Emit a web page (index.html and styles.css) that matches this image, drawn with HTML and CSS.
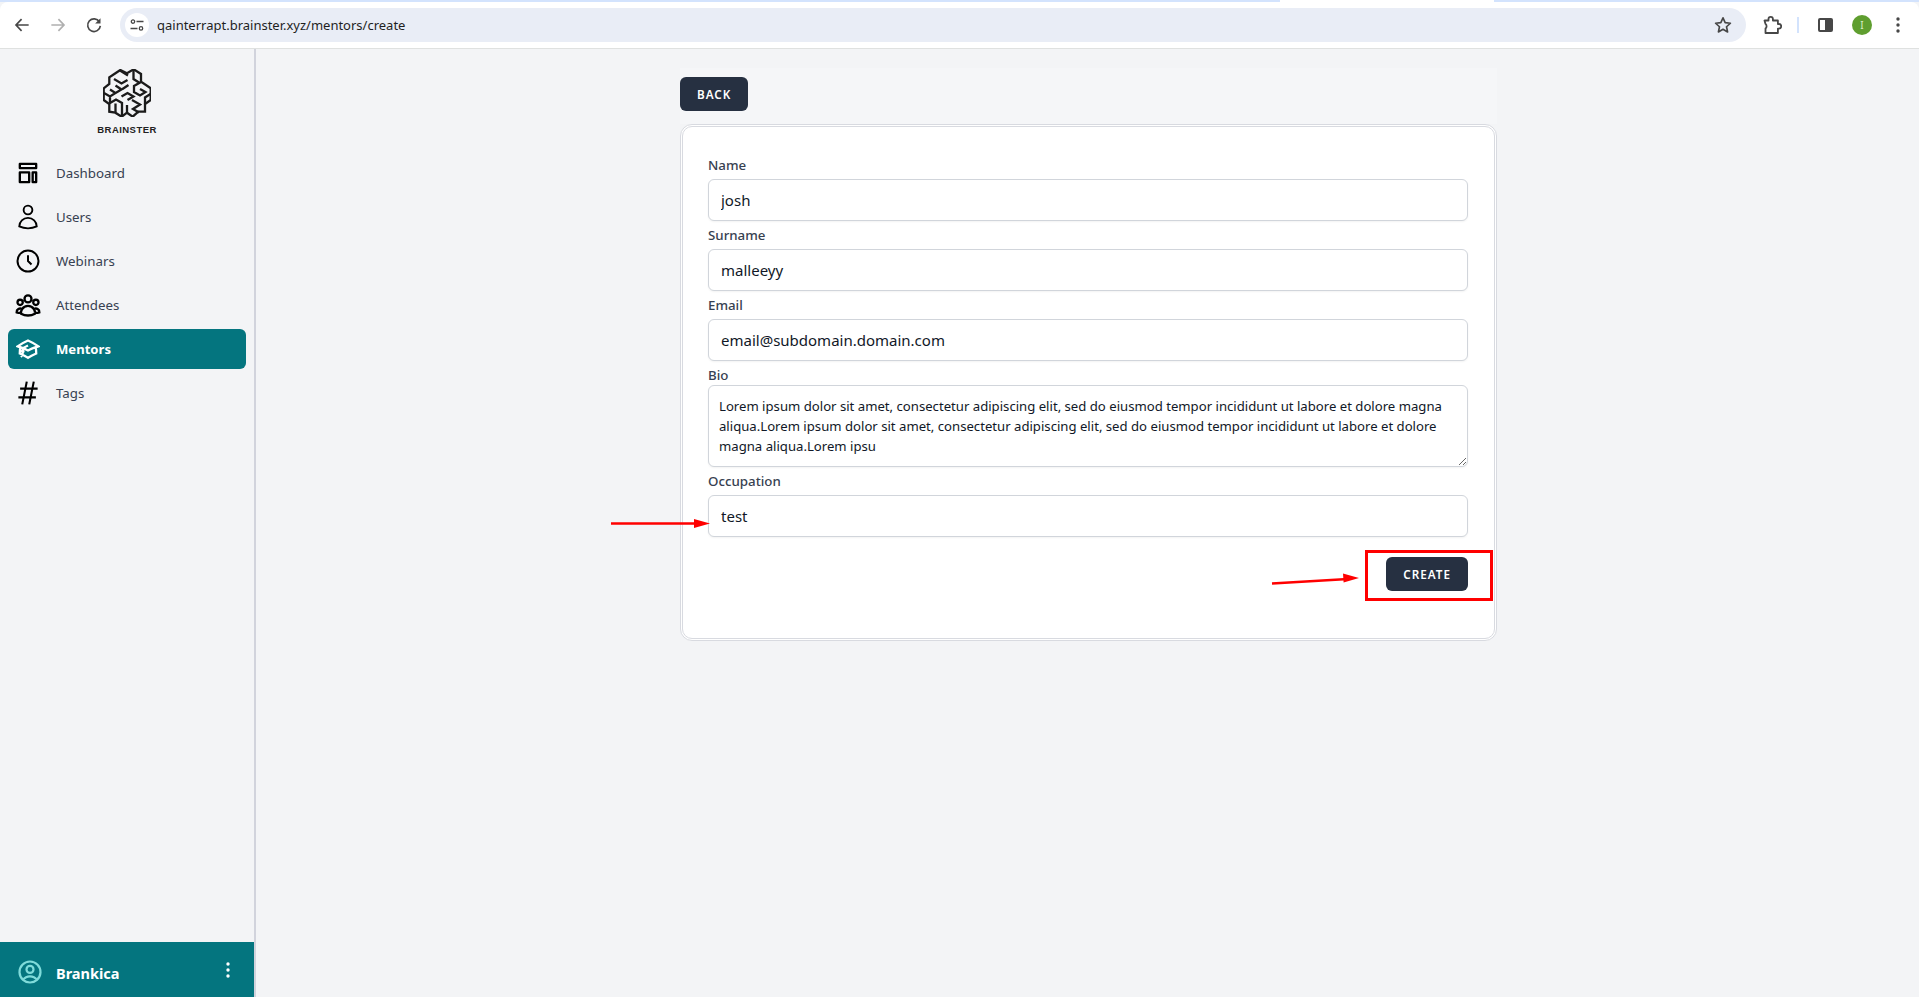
FILE: index.html
```html
<!DOCTYPE html>
<html lang="en">
<head>
<meta charset="utf-8">
<title>Create mentor</title>
<link rel="stylesheet" href="styles.css">
</head>
<body>
<div class="window">
  <div class="tabstrip"><span class="seg seg-a"></span><span class="seg seg-gap"></span><span class="seg seg-b"></span></div>
  <header class="toolbar">
    <svg class="tb-icon back" viewBox="0 0 24 24"><path d="M20 12H5m6.5-7L4.8 12l6.7 7" fill="none" stroke="#474747" stroke-width="2"/></svg>
    <svg class="tb-icon fwd" viewBox="0 0 24 24"><path d="M4 12h15m-6.500-7 6.700 7-6.700 7" fill="none" stroke="#b0b0b0" stroke-width="2"/></svg>
    <svg class="tb-icon reload" viewBox="0 0 24 24"><path d="M18.500 8.200A7.600 7.600 0 1 0 19.600 13" fill="none" stroke="#474747" stroke-width="2"/><path d="M19.800 3.800v6.400h-6.400z" fill="#474747"/></svg>
    <div class="omnibox">
      <span class="site-chip"><svg viewBox="0 0 16 16" width="16" height="16"><circle cx="4" cy="4.600" r="1.700" fill="none" stroke="#474747" stroke-width="1.300"/><path d="M7.500 4.600h7M1.500 11.400h7" stroke="#474747" stroke-width="1.500" fill="none"/><circle cx="12" cy="11.400" r="1.700" fill="none" stroke="#474747" stroke-width="1.300"/></svg></span>
      <span class="url">qainterrapt.brainster.xyz/mentors/create</span>
      <svg class="star" viewBox="0 0 24 24" width="20" height="20"><path d="M12 3.400l2.600 5.800 6.300.7-4.700 4.200 1.300 6.200-5.500-3.200-5.500 3.200 1.300-6.200-4.700-4.200 6.300-.7z" fill="none" stroke="#474747" stroke-width="2" stroke-linejoin="round"/></svg>
    </div>
    <div class="tb-right">
      <svg class="ext" viewBox="0 0 20 20" width="20" height="20"><path d="M2.500 5.500h4V4a2.200 2.200 0 0 1 4.400 0v1.500h5v3.500h1a2.300 2.300 0 0 1 0 4.600h-1v4.400H3.500v-4.500a3 3 0 0 0 0-4.600z" fill="none" stroke="#474747" stroke-width="1.800" stroke-linejoin="round"/></svg>
      <span class="divider"></span>
      <span class="panel-toggle"><span class="panel-dark"></span></span>
      <span class="avatar">I</span>
      <svg class="kebab" viewBox="0 0 4 18" width="4" height="18"><circle cx="2" cy="3" r="1.700" fill="#474747"/><circle cx="2" cy="9" r="1.700" fill="#474747"/><circle cx="2" cy="15" r="1.700" fill="#474747"/></svg>
    </div>
  </header>

  <div class="app">
    <aside class="sidebar">
      <div class="brand">
        <svg class="brain" viewBox="0 0 48 48" width="48" height="48" fill="none" stroke="#1b1b1b" stroke-width="2.300">
          <path d="M11.300 5l6-4 6.700 3.300 6.700-4 7.300 4.700v7.700l9.700 6.600V31L42 35v7.700h-6.700l-5.600 5-5.700-4-5.300 4-6.400-4-6-1v-7.700L.7 31V19.300L6.300 15V8.300z"/>
          <path d="M11 10l7.500 4.500L24.500 11M17 1.500l8 5M30.500 1v9l5.500 3.500M38 13l-7 4v6l6 3.500 5.500-3.500-5.500-3M47.500 25l-5.500 3.500V35M1 24l6 3.500 5.500-3.500L7 20.500M7 27.500V34l6-3.500 6 3.500v13M12.500 43v-8.500M12.500 24l6-3.500-6-4M18.500 27.500l6-3.500 6 3.500-6 3.500M19.500 20l6-4M24 36v7.500M29 31l8 4.500-7 4.500 6 3.500"/>
        </svg>
        <span class="brand-name">BRAINSTER</span>
      </div>
      <nav class="nav">
        <a class="nav-item"><svg class="nav-icon" viewBox="0 0 24 24"><path d="M5 4.200h14v3.600H5zM5 11.500h8v8.300H5zM16 11.500h3v8.300h-3z" fill="none" stroke="#000" stroke-width="2" stroke-linejoin="round"/></svg>Dashboard</a>
        <a class="nav-item"><svg class="nav-icon" viewBox="0 0 24 24"><path d="M15.750 6a3.750 3.750 0 11-7.500 0 3.750 3.750 0 017.500 0zM4.501 20.118a7.500 7.500 0 0114.998 0A17.933 17.933 0 0112 21.750c-2.676 0-5.216-.584-7.499-1.632z" fill="none" stroke="#000" stroke-width="1.600"/></svg>Users</a>
        <a class="nav-item"><svg class="nav-icon" viewBox="0 0 24 24"><path d="M12 7v5l3 3m6-3a9 9 0 11-18 0 9 9 0 0118 0z" fill="none" stroke="#000" stroke-width="1.700"/></svg>Webinars</a>
        <a class="nav-item"><svg class="nav-icon" viewBox="0 0 24 24"><path d="M18 18.720a9.094 9.094 0 003.741-.479 3 3 0 00-4.682-2.720m.94 3.198l.001.031c0 .225-.012.447-.037.666A11.944 11.944 0 0112 21c-2.170 0-4.207-.576-5.963-1.584A6.062 6.062 0 016 18.719m12 0a5.971 5.971 0 00-.941-3.197m0 0A5.995 5.995 0 0012 12.750a5.995 5.995 0 00-5.058 2.772m0 0a3 3 0 00-4.681 2.720 8.986 8.986 0 003.740.477m.94-3.197a5.971 5.971 0 00-.94 3.197M15 6.750a3 3 0 11-6 0 3 3 0 016 0zm6 3a2.250 2.250 0 11-4.500 0 2.250 2.250 0 014.500 0zm-13.500 0a2.250 2.250 0 11-4.500 0 2.250 2.250 0 014.500 0z" fill="none" stroke="#000" stroke-width="2"/></svg>Attendees</a>
        <a class="nav-item active"><svg class="nav-icon nav-icon-small" viewBox="0 0 24 24"><path d="M4.260 10.147a60.436 60.436 0 00-.491 6.347A48.627 48.627 0 0112 20.904a48.627 48.627 0 018.232-4.410 60.460 60.460 0 00-.491-6.347m-15.482 0a50.570 50.570 0 00-2.658-.813A59.905 59.905 0 0112 3.493a59.902 59.902 0 0110.399 5.840c-.896.248-1.783.520-2.658.814m-15.482 0A50.697 50.697 0 0112 13.489a50.702 50.702 0 017.740-3.342M6.750 15a.750.750 0 100-1.500.750.750 0 000 1.500zm0 0v-3.675A55.378 55.378 0 0112 8.443m-7.007 11.550A5.981 5.981 0 006.750 15.750v-1.500" fill="none" stroke="#fff" stroke-width="2.300"/></svg>Mentors</a>
        <a class="nav-item"><svg class="nav-icon" viewBox="0 0 24 24"><path d="M5.250 8.250h15m-16.500 7.500h15m-1.800-13.500l-3.900 19.500m-2.100-19.500l-3.900 19.500" fill="none" stroke="#000" stroke-width="1.800"/></svg>Tags</a>
      </nav>
      <div class="user-bar">
        <svg class="user-icon" viewBox="0 0 24 24"><path d="M17.982 18.725A7.488 7.488 0 0012 15.750a7.488 7.488 0 00-5.982 2.975m11.963 0a9 9 0 10-11.963 0m11.963 0A8.966 8.966 0 0112 21a8.966 8.966 0 01-5.982-2.275M15 9.750a3 3 0 11-6 0 3 3 0 016 0z" fill="none" stroke="#7fdbda" stroke-width="1.900"/></svg>
        <span class="user-name">Brankica</span>
        <svg class="user-more" viewBox="0 0 4 16" width="4" height="16"><circle cx="2" cy="2" r="1.700" fill="#fff"/><circle cx="2" cy="8" r="1.700" fill="#fff"/><circle cx="2" cy="14" r="1.700" fill="#fff"/></svg>
      </div>
    </aside>

    <main class="main">
      <div class="column">
        <div class="topbar"><button class="btn" type="button">BACK</button></div>
        <form class="card">
          <label class="field-label">Name</label>
          <input class="input" type="text" value="josh">
          <label class="field-label">Surname</label>
          <input class="input" type="text" value="malleeyy">
          <label class="field-label">Email</label>
          <input class="input" type="text" value="email@subdomain.domain.com">
          <label class="field-label field-label-tight">Bio</label>
          <textarea class="textarea">Lorem ipsum dolor sit amet, consectetur adipiscing elit, sed do eiusmod tempor incididunt ut labore et dolore magna aliqua.Lorem ipsum dolor sit amet, consectetur adipiscing elit, sed do eiusmod tempor incididunt ut labore et dolore magna aliqua.Lorem ipsu</textarea>
          <label class="field-label">Occupation</label>
          <input class="input" type="text" value="test">
          <div class="actions"><button class="btn" type="button">CREATE</button></div>
        </form>
      </div>
    </main>
  </div>

  <svg class="marks" viewBox="0 0 1919 997" width="1919" height="997">
    <rect x="1366.500" y="551.500" width="125" height="48" fill="none" stroke="#f00" stroke-width="3"/>
    <path d="M611 523.500h88M1272 583.500l76-4.500" stroke="#f00" stroke-width="2.500" fill="none"/>
    <path d="M710 523.500l-16-4.500v9zM1359 578l-16-4.500.6 9z" fill="#f00"/>
  </svg>
</div>
</body>
</html>
```
FILE: styles.css
```css
* { box-sizing: border-box; }
html, body { margin: 0; height: 100%; }
body { font-family: "Noto Sans", "Open Sans", sans-serif; background: #f3f4f6; overflow: hidden; }
.window { position: relative; width: 1919px; height: 997px; display: flex; flex-direction: column; background: #f3f4f6; }

.tabstrip { display: flex; height: 2px; background: #d3e3fd; flex: none; }
.seg-a { width: 1280px; background: #d3e3fd; }
.seg-gap { width: 214px; background: #fff; }
.seg-b { flex: 1; background: #d3e3fd; }

.toolbar { height: 47px; flex: none; background: #fff; border-bottom: 1px solid #dfe1e0; display: flex; align-items: center; padding: 0 0 1px 0; border-radius: 8px 8px 0 0; }
.tb-icon { width: 20px; height: 20px; flex: none; }
.back { margin-left: 12px; }
.fwd { margin-left: 16px; }
.reload { margin-left: 16px; }
.omnibox { margin-left: 16px; width: 1626px; height: 34px; background: #e9edf6; border-radius: 17px; display: flex; align-items: center; padding: 0 13px 0 5px; }
.site-chip { width: 24px; height: 24px; border-radius: 50%; background: #fff; display: flex; align-items: center; justify-content: center; flex: none; }
.url { margin-left: 8px; font-size: 13px; color: #1f1f1f; flex: 1; }
.star { flex: none; }
.tb-right { flex: 1; display: flex; align-items: center; padding-left: 16px; }
.divider { width: 2px; height: 16px; background: #d3e3fd; margin-left: 15px; }
.panel-toggle { width: 15px; height: 14px; border: 2px solid #474747; border-radius: 2px; margin-left: 19px; display: flex; justify-content: flex-end; }
.panel-dark { width: 6px; background: #474747; }
.avatar { width: 20px; height: 20px; border-radius: 50%; background: #5f9e2f; color: #dcefc8; font-size: 10px; line-height: 20px; text-align: center; margin-left: 19px; }
.kebab { margin-left: 24px; }

.app { flex: 1; display: flex; min-height: 0; }
.sidebar { width: 256px; flex: none; border-right: 2px solid #d1d3dc; display: flex; flex-direction: column; background: #f3f4f6; }
.brand { height: 104px; padding-top: 20px; display: flex; flex-direction: column; align-items: center; }
.brain { display: block; flex: none; }
.brand-name { font-family: "Liberation Sans", sans-serif; font-weight: 700; font-size: 9.500px; letter-spacing: .45px; color: #222; margin-top: 7px; line-height: 12px; }
.nav { flex: 1; display: flex; flex-direction: column; gap: 4px; padding: 0 8px; }
.nav-item { height: 40px; display: flex; align-items: center; border-radius: 6px; padding-left: 6px; font-size: 13.300px; color: #374151; }
.nav-item.active { background: #04757f; color: #fff; font-weight: 700; font-size: 13.100px; }
.nav-icon { width: 28px; height: 28px; flex: none; margin-right: 14px; }
.nav-icon-small { width: 24px; height: 24px; margin-left: 2px; margin-right: 16px; }
.user-bar { height: 55px; flex: none; background: #04757f; display: flex; align-items: center; padding: 0 24px 0 16px; color: #fff; }
.user-icon { width: 28px; height: 28px; flex: none; margin-right: 12px; margin-top: 5px; }
.user-name { flex: 1; font-weight: 700; font-size: 14.500px; margin-top: 6px; }

.main { flex: 1; display: flex; justify-content: center; min-width: 0; padding-left: 2px; }
.column { width: 817px; padding-top: 19px; display: flex; flex-direction: column; align-items: stretch; }
.topbar { padding: 9px 0 13px; background: #f5f6f8; display: flex; }
.btn { height: 34px; padding: 0 17px; background: #263041; color: #fff; border: 0; border-radius: 6px; font-family: inherit; font-size: 11.700px; font-weight: 600; letter-spacing: 1px; }
.card { width: 100%; height: 517px; padding: 28px 26px 0 25px; background: #fff; border: 3px double #d8dae0; border-radius: 12px; display: flex; flex-direction: column; }
.field-label { display: block; height: 20px; line-height: 20px; font-size: 13.300px; font-weight: 500; color: #374151; margin-bottom: 4px; }
.field-label-tight { margin-bottom: 0; }
.input { display: block; width: 100%; height: 42px; flex: none; border: 1px solid #d1d5db; border-radius: 6px; padding: 0 12px; margin-bottom: 4px; background: #fff; font-family: inherit; font-size: 15px; color: #111827; box-shadow: 0 1px 2px rgba(0,0,0,.05); }
.textarea { display: block; width: 100%; height: 82px; flex: none; border: 1px solid #d1d5db; border-radius: 6px; padding: 10px 10px; margin-bottom: 4px; background: #fff; font-family: inherit; font-size: 13.150px; line-height: 20px; color: #111827; box-shadow: 0 1px 2px rgba(0,0,0,.05); }
.actions { display: flex; justify-content: flex-end; margin-top: 16px; }

.marks { position: absolute; left: 0; top: 0; pointer-events: none; }
```
